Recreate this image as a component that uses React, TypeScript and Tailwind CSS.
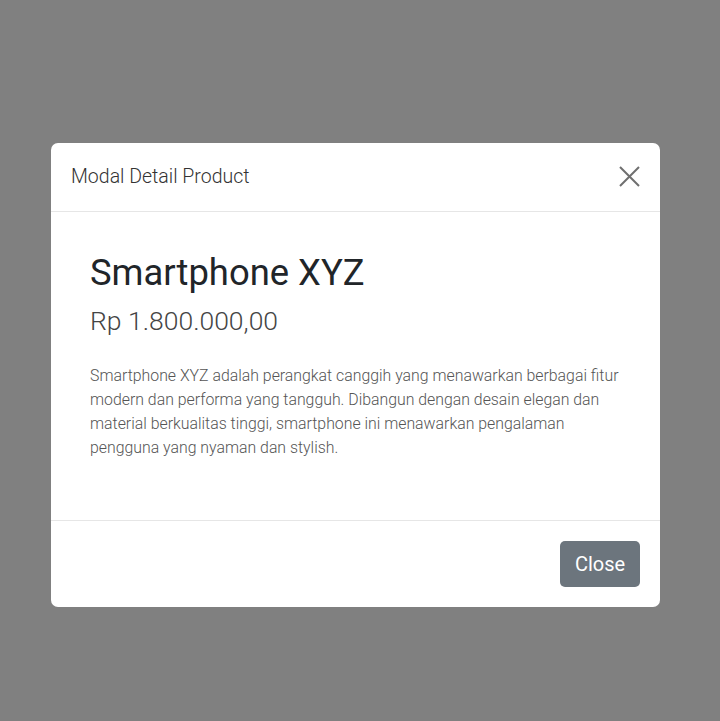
export default function App() {
  return (
    <div className="h-[721px] w-[720px] bg-[#808080] pt-[143px] pl-[51px] font-['Roboto',sans-serif]">
      <div className="w-[609px] rounded-[7px] bg-white overflow-hidden">
        {/* header */}
        <div className="h-[69px] flex items-center justify-between pl-5 pr-[19px] border-b border-[#e6e6e6]">
          <h5 className="text-[19.5px] font-light text-[#333]">Modal Detail Product</h5>
          <button className="w-6 h-6 -mt-[2px] flex items-center justify-center text-[#6f6f6f]">
            <svg width="21" height="21" viewBox="0 0 21 21" fill="none" stroke="currentColor" strokeWidth="2">
              <path d="M1 1L20 20M20 1L1 20" />
            </svg>
          </button>
        </div>

        {/* body */}
        <div className="h-[309px] px-[39px] pt-[39px] border-b border-[#e6e6e6]">
          <h1 className="text-[36.4px] leading-[1.2] text-[#212529]">Smartphone XYZ</h1>
          <h3 className="mt-[10px] text-[26.5px] font-light leading-[1.2] text-[#444]">Rp 1.800.000,00</h3>
          <p className="mt-[28px] text-[15.85px] font-light leading-[24px] text-[#555]">
            Smartphone XYZ adalah perangkat canggih yang menawarkan berbagai fitur modern dan performa yang tangguh.
            Dibangun dengan desain elegan dan material berkualitas tinggi, smartphone ini menawarkan pengalaman
            pengguna yang nyaman dan stylish.
          </p>
        </div>

        {/* footer */}
        <div className="h-[86px] flex items-center justify-end pr-5">
          <button className="w-20 h-[46px] rounded-[5px] bg-[#6c757d] text-white text-[20px]">Close</button>
        </div>
      </div>
    </div>
  );
}
